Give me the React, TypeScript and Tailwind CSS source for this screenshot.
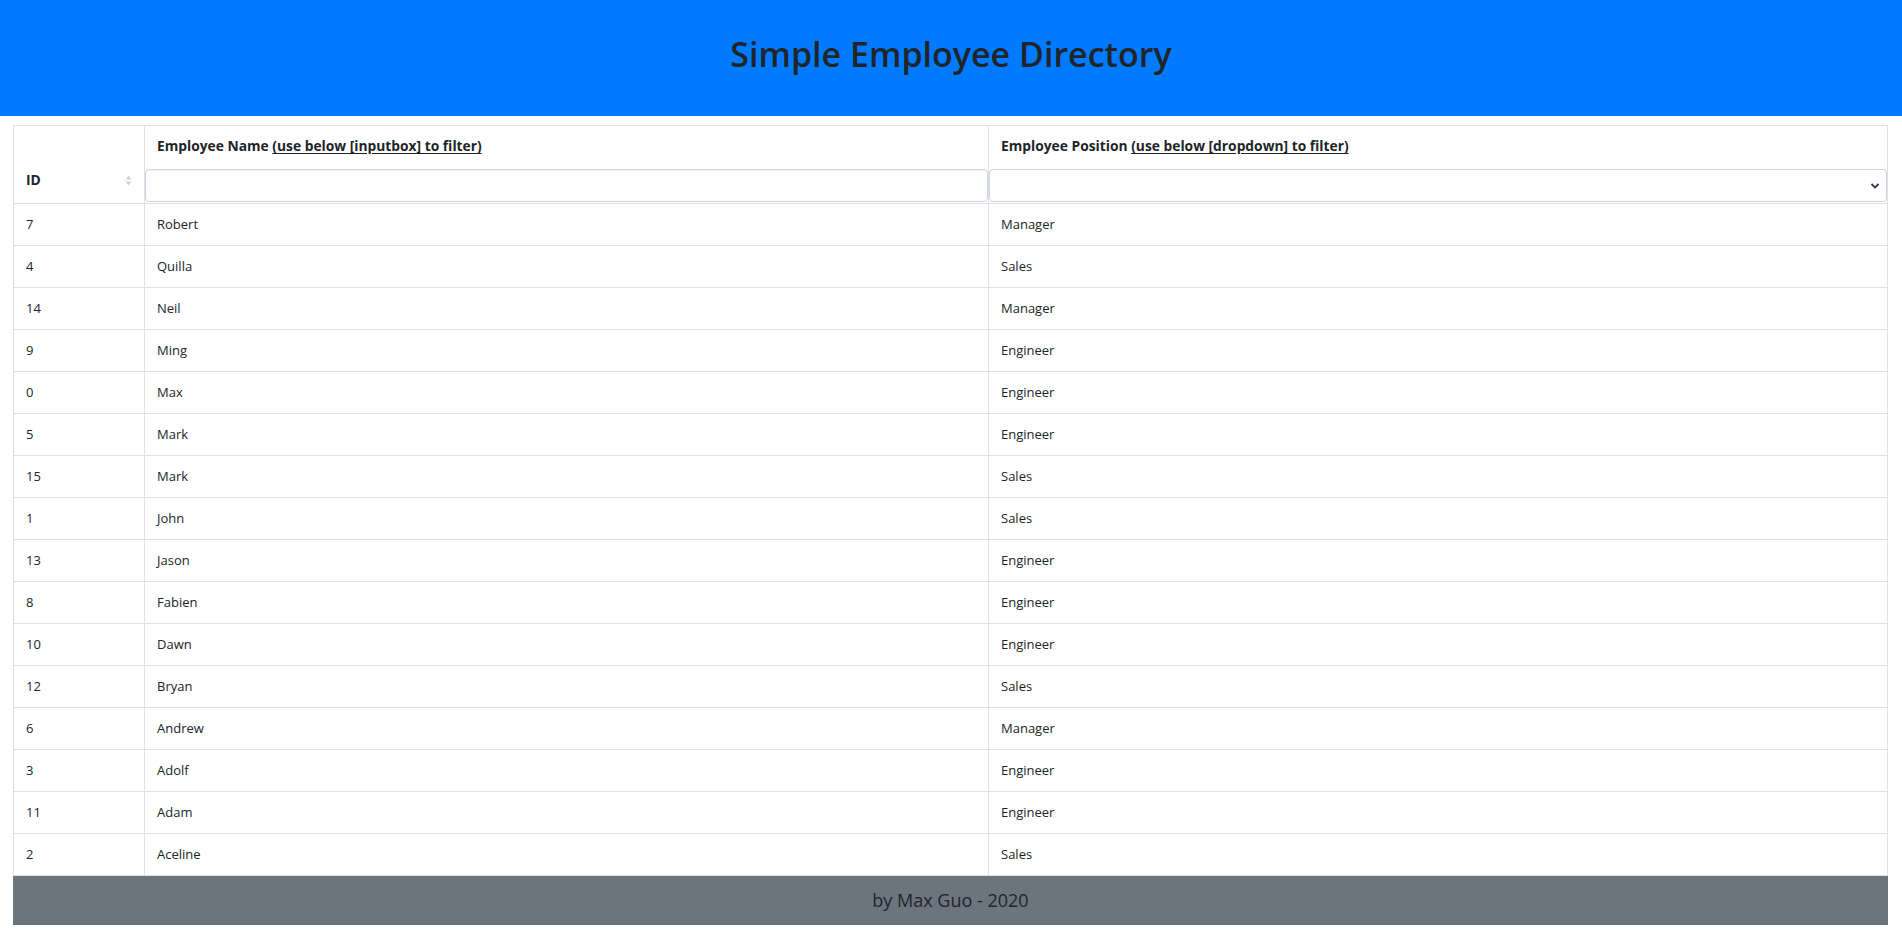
import React from 'react'

interface Employee {
  id: number
  name: string
  position: string
}

const employees: Employee[] = [
  { id: 7, name: 'Robert', position: 'Manager' },
  { id: 4, name: 'Quilla', position: 'Sales' },
  { id: 14, name: 'Neil', position: 'Manager' },
  { id: 9, name: 'Ming', position: 'Engineer' },
  { id: 0, name: 'Max', position: 'Engineer' },
  { id: 5, name: 'Mark', position: 'Engineer' },
  { id: 15, name: 'Mark', position: 'Sales' },
  { id: 1, name: 'John', position: 'Sales' },
  { id: 13, name: 'Jason', position: 'Engineer' },
  { id: 8, name: 'Fabien', position: 'Engineer' },
  { id: 10, name: 'Dawn', position: 'Engineer' },
  { id: 12, name: 'Bryan', position: 'Sales' },
  { id: 6, name: 'Andrew', position: 'Manager' },
  { id: 3, name: 'Adolf', position: 'Engineer' },
  { id: 11, name: 'Adam', position: 'Engineer' },
  { id: 2, name: 'Aceline', position: 'Sales' },
]

function SortCaret() {
  return (
    <svg width="7" height="11" viewBox="0 0 7 11" className="shrink-0">
      <path d="M3.5 0.5 L6.5 4.5 H0.5 Z" fill="#cfd3d7" />
      <path d="M3.5 10.5 L6.5 6.5 H0.5 Z" fill="#cfd3d7" />
    </svg>
  )
}

export default function App() {
  return (
    <div className="min-h-[934px] bg-white text-[#212529] font-['Segoe_UI','Open_Sans',sans-serif]">
      {/* Header */}
      <header className="flex h-[116px] items-center justify-center bg-[#007bff] pb-[9px]">
        <h1 className="text-[34px] leading-none font-semibold text-[#212529]">Simple Employee Directory</h1>
      </header>

      <div className="mx-[13px] mt-[9px] mr-[14px]">
        <table className="w-full border-collapse text-[13px] table-fixed">
          <colgroup>
            <col className="w-[131px]" />
            <col className="w-[844px]" />
            <col />
          </colgroup>
          <thead>
            <tr className="h-[78px]">
              <th className="border border-[#dee2e6] px-3 pt-[42px] pb-[10px] text-left align-middle text-[13.8px] font-bold">
                <div className="flex items-center justify-between">
                  <span>ID</span>
                  <SortCaret />
                </div>
              </th>
              <th className="border border-[#dee2e6] p-0 text-left align-top text-[13.8px] font-bold">
                <div className="px-3 pt-[10px] pb-[13px] leading-[20px]">
                  Employee Name <span className="underline underline-offset-2">(use below [inputbox] to filter)</span>
                </div>
                <input
                  type="text"
                  className="block h-[33px] w-full rounded border border-[#ced4da] bg-white px-2 shadow-[inset_0_1px_1px_rgba(0,0,0,0.05)] outline-none"
                />
              </th>
              <th className="border border-[#dee2e6] p-0 text-left align-top text-[13.8px] font-bold">
                <div className="px-3 pt-[10px] pb-[13px] leading-[20px]">
                  Employee Position <span className="underline underline-offset-2">(use below [dropdown] to filter)</span>
                </div>
                <div className="relative">
                  <select className="block h-[33px] w-full appearance-none rounded border border-[#ced4da] bg-white px-2 outline-none">
                    <option value=""></option>
                    <option>Manager</option>
                    <option>Sales</option>
                    <option>Engineer</option>
                  </select>
                  <svg
                    width="10"
                    height="10"
                    viewBox="0 0 10 10"
                    className="pointer-events-none absolute right-[7px] top-[12px]"
                  >
                    <path d="M1.5 3 L5 6.5 L8.5 3" fill="none" stroke="#343a40" strokeWidth="1.8" />
                  </svg>
                </div>
              </th>
            </tr>
          </thead>
          <tbody>
            {employees.map((e) => (
              <tr key={e.id} className="h-[42px]">
                <td className="border border-[#dee2e6] px-3 align-middle">{e.id}</td>
                <td className="border border-[#dee2e6] px-3 align-middle">{e.name}</td>
                <td className="border border-[#dee2e6] px-3 align-middle">{e.position}</td>
              </tr>
            ))}
          </tbody>
        </table>

        {/* Footer */}
        <footer className="flex h-[49px] items-center justify-center bg-[#6c757d]">
          <span className="text-[18px] text-[#212529]">by Max Guo - 2020</span>
        </footer>
      </div>
    </div>
  )
}
